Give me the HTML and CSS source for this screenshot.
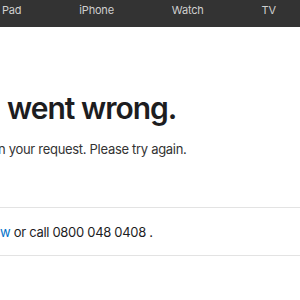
FILE: index.html
```html
<!DOCTYPE html>
<html>
<head>
<meta charset="utf-8">
<link rel="stylesheet" href="styles.css">
</head>
<body>
<nav class="globalnav">
  <a class="nav-item">Pad</a>
  <a class="nav-item">iPhone</a>
  <a class="nav-item">Watch</a>
  <a class="nav-item">TV</a>
</nav>
<main class="content">
  <h1 class="headline">went wrong.</h1>
  <p class="intro">n your request. Please try again.</p>
  <div class="contact">
    <p class="contact-text"><a class="link">w</a> or call 0800 048 0408 .</p>
  </div>
</main>
</body>
</html>
```
FILE: styles.css
```css
html, body {
  margin: 0;
  padding: 0;
  background: #fff;
  font-family: Inter, "Noto Sans", sans-serif;
  overflow: hidden;
}
.globalnav {
  height: 27px;
  box-sizing: border-box;
  padding: 2px 0 0 2px;
  background: #333333;
  display: flex;
  align-items: flex-start;
  gap: 58px;
}
.nav-item {
  color: #cfcfcf;
  font-size: 11px;
  line-height: 16px;
  letter-spacing: -0.2px;
}
.content {
  padding-top: 63px;
}
.headline {
  margin: 0 0 0 7px;
  font-size: 30px;
  font-weight: 600;
  line-height: 36px;
  color: #1d1d1f;
  letter-spacing: -1px;
}
.intro {
  margin: 14px 0 0 -2px;
  font-size: 13px;
  line-height: 18px;
  letter-spacing: -0.3px;
  color: #333;
}
.contact {
  margin-top: 49px;
  border-top: 1px solid #e3e3e3;
  border-bottom: 1px solid #e3e3e3;
  height: 47px;
  display: flex;
  align-items: center;
}
.contact-text {
  margin: 0;
  font-size: 13px;
  letter-spacing: -0.3px;
  color: #1d1d1f;
}
.link {
  color: #0070c9;
}
```
